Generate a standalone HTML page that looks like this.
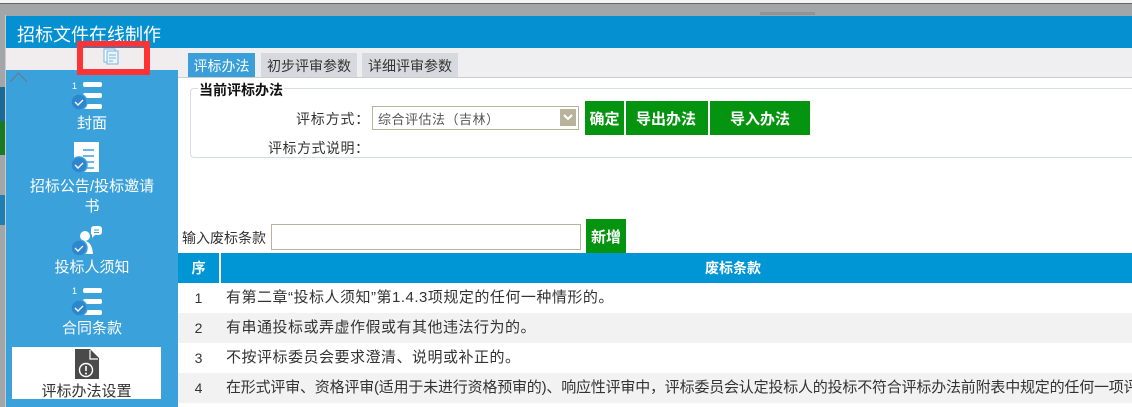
<!DOCTYPE html>
<html><head><meta charset="utf-8"><style>
*{margin:0;padding:0;box-sizing:border-box}
body{width:1132px;height:407px;overflow:hidden;background:#a3a6a9;font-family:"Liberation Sans","Noto Sans CJK SC",sans-serif;position:relative;font-size:13px;color:#333}
.a{position:absolute}
.t{white-space:nowrap}
.btn{position:absolute;background:#05940f;color:#fff;font-weight:bold;font-size:15px;display:flex;align-items:center;justify-content:center}
.row{position:absolute;left:178px;width:954px;height:30px;line-height:30px;font-size:15px;color:#333;overflow:hidden}
.row .n{position:absolute;left:0;width:41px;text-align:center;font-size:14px}
.row .c{position:absolute;left:48px;white-space:nowrap;letter-spacing:0.5px}
.lab{position:absolute;width:172px;text-align:center;color:#fff;font-size:15px;left:6px;white-space:nowrap}
</style></head><body>
<div class="a" style="left:0;top:0;width:1132px;height:4px;background:#f4f4f4;border-bottom:1px solid #666"></div>
<div class="a" style="left:760px;top:12px;width:55px;height:3px;background:#8f9396"></div>
<div class="a" style="left:0;top:87px;width:6px;height:34px;background:#1a6a95"></div>
<div class="a" style="left:0;top:121px;width:6px;height:34px;background:#1a7a22"></div>
<div class="a" style="left:0;top:195px;width:6px;height:30px;background:#1f7fb0"></div>
<div class="a" style="left:5px;top:15px;width:1px;height:392px;background:#c8ccd0"></div>
<div class="a" style="left:6px;top:16px;width:1126px;height:32px;background:#0590d2"></div>
<div class="a t" style="left:17px;top:21px;color:#fff;font-size:18px">招标文件在线制作</div>
<div class="a" style="left:6px;top:48px;width:1126px;height:29px;background:#efeff1"></div>
<div class="a" style="left:6px;top:48px;width:172px;height:22px;background:#f1eced"></div>
<div class="a" style="left:178px;top:77px;width:954px;height:1px;background:#ccc"></div>
<div class="a" style="left:178px;top:78px;width:954px;height:329px;background:#fff"></div>
<div class="a t" style="left:188px;top:53px;width:67px;height:24px;background:#3a9fd8;color:#fff;font-size:14px;line-height:26px;text-align:center">评标办法</div>
<div class="a t" style="left:261px;top:53px;width:96px;height:24px;background:#d7d9de;color:#333;font-size:14px;line-height:26px;text-align:center">初步评审参数</div>
<div class="a t" style="left:362px;top:53px;width:96px;height:24px;background:#d7d9de;color:#333;font-size:14px;line-height:26px;text-align:center">详细评审参数</div>
<div class="a" style="left:6px;top:70px;width:172px;height:337px;background:#3aa1da"></div>
<svg class="a" style="left:9px;top:71px" width="20" height="12"><path d="M1 11 L9.5 2 L18 11" stroke="#6a7a88" fill="none" stroke-width="1"/></svg>
<div class="a" style="left:77px;top:41px;width:73px;height:34px;border:6px solid #f33"></div>
<svg class="a" style="left:103px;top:48px" width="16" height="17"><rect x="1" y="1" width="11" height="13" fill="#fff" stroke="#7ab6de"/><rect x="4" y="3" width="11" height="13" fill="#eaf4fb" stroke="#7ab6de"/><path d="M6 7h7M6 10h7M6 13h4" stroke="#7ab6de"/></svg>
<svg class="a" style="left:70px;top:80px" width="36" height="32"><text x="2" y="9" fill="#fff" font-size="9" font-family="Liberation Sans">1</text><rect x="13" y="2" width="19" height="5" rx="2" fill="#fff"/><rect x="13" y="13" width="19" height="5" rx="2" fill="#fff"/><rect x="13" y="24" width="19" height="5" rx="2" fill="#fff"/><circle cx="9" cy="22" r="8" fill="#2e86cf" stroke="#3aa1da" stroke-width="1.5"/><path d="M5 22l3 3 5-5" stroke="#fff" fill="none" stroke-width="1.4"/></svg>
<div class="lab" style="top:112px">封面</div>
<svg class="a" style="left:70px;top:141px" width="36" height="33"><rect x="4" y="1" width="25" height="30" fill="#fff"/><path d="M13 9h11M13 15h11M13 21h11M13 27h11" stroke="#3aa1da" stroke-width="1.5"/><circle cx="9" cy="24" r="8" fill="#2e86cf" stroke="#3aa1da" stroke-width="1.5"/><path d="M5 24l3 3 5-5" stroke="#fff" fill="none" stroke-width="1.4"/></svg>
<div class="lab" style="top:175px">招标公告/投标邀请</div>
<div class="lab" style="top:195px">书</div>
<svg class="a" style="left:70px;top:224px" width="36" height="33"><path d="M24 2h5a3 3 0 0 1 3 3v3a3 3 0 0 1-3 3h-4l-3 3v-3a3 3 0 0 1-1-3v-3a3 3 0 0 1 3-3z" fill="#fff"/><path d="M24 6h5M24 8.5h5" stroke="#3aa1da"/><circle cx="15" cy="12" r="5" fill="#fff"/><path d="M7 30 Q8 18 15 17 Q22 18 23 30z" fill="#fff"/><circle cx="9" cy="24" r="8" fill="#2e86cf" stroke="#3aa1da" stroke-width="1.5"/><path d="M5 24l3 3 5-5" stroke="#fff" fill="none" stroke-width="1.4"/></svg>
<div class="lab" style="top:256px">投标人须知</div>
<svg class="a" style="left:70px;top:285px" width="36" height="33"><text x="2" y="9" fill="#fff" font-size="9" font-family="Liberation Sans">1</text><rect x="13" y="3" width="19" height="5" rx="2" fill="#fff"/><rect x="13" y="14" width="19" height="5" rx="2" fill="#fff"/><rect x="13" y="25" width="19" height="5" rx="2" fill="#fff"/><circle cx="9" cy="23" r="8" fill="#2e86cf" stroke="#3aa1da" stroke-width="1.5"/><path d="M5 23l3 3 5-5" stroke="#fff" fill="none" stroke-width="1.4"/></svg>
<div class="lab" style="top:317px">合同条款</div>
<div class="a" style="left:12px;top:347px;width:149px;height:52px;background:#fff"></div>
<svg class="a" style="left:75px;top:349px" width="26" height="30"><path d="M0 0h15l9 9v21H0z" fill="#4a4a4a"/><path d="M15 1v9h8" stroke="#fff" fill="none" stroke-width="1.2"/><circle cx="11" cy="21" r="6.5" fill="none" stroke="#fff" stroke-width="1.4"/><path d="M11 17v5" stroke="#fff" stroke-width="1.6"/><circle cx="11" cy="24.5" r="1" fill="#fff"/></svg>
<div class="lab" style="top:380px;color:#333;left:12px;width:149px">评标办法设置</div>
<div class="a" style="left:190px;top:88px;width:950px;height:70px;border:1px solid #d5dde5;border-radius:4px"></div>
<div class="a t" style="left:198px;top:80px;background:#fff;padding:0 1px;font-weight:bold;font-size:14px;color:#111">当前评标办法</div>
<div class="a t" style="left:296px;top:109px;font-size:14px;color:#333;letter-spacing:0.8px">评标方式：</div>
<div class="a" style="left:372px;top:106px;width:207px;height:24px;border:1px solid #b8b39a;background:#fff"></div>
<div class="a t" style="left:378px;top:109px;font-size:13px;color:#555;letter-spacing:0.5px">综合评估法（吉林）</div>
<div class="a" style="left:560px;top:109px;width:16px;height:17px;background:#b8b39a"></div>
<svg class="a" style="left:563px;top:113px" width="10" height="8"><path d="M1 2l4 4 4-4" stroke="#fff" stroke-width="2" fill="none"/></svg>
<div class="a t" style="left:268px;top:138px;font-size:14px;color:#333;letter-spacing:0.5px">评标方式说明：</div>
<div class="btn" style="left:585px;top:101px;width:39px;height:34px">确定</div>
<div class="btn" style="left:626px;top:101px;width:82px;height:34px;justify-content:flex-start;padding-left:10px">导出办法</div>
<div class="btn" style="left:710px;top:101px;width:100px;height:34px">导入办法</div>
<div class="a t" style="left:182px;top:228px;font-size:14px;color:#333">输入废标条款</div>
<div class="a" style="left:271px;top:224px;width:310px;height:26px;border:1px solid #b8b39a"></div>
<div class="btn" style="left:586px;top:219px;width:40px;height:34px">新增</div>
<div class="a" style="left:178px;top:253px;width:954px;height:30px;background:#0095d5"></div>
<div class="a" style="left:219px;top:253px;width:2px;height:30px;background:#fff"></div>
<div class="a t" style="left:178px;top:253px;width:41px;line-height:30px;text-align:center;color:#fff;font-weight:bold;font-size:14px">序</div>
<div class="a t" style="left:705px;top:253px;line-height:30px;color:#fff;font-weight:bold;font-size:14px">废标条款</div>
<div class="row" style="top:283px;background:#fff"><span class="n">1</span><span class="c">有第二章“投标人须知”第1.4.3项规定的任何一种情形的。</span></div>
<div class="row" style="top:313px;background:#f2f2f2"><span class="n">2</span><span class="c">有串通投标或弄虚作假或有其他违法行为的。</span></div>
<div class="row" style="top:343px;background:#fff"><span class="n">3</span><span class="c">不按评标委员会要求澄清、说明或补正的。</span></div>
<div class="row" style="top:373px;background:#f2f2f2"><span class="n">4</span><span class="c" style="letter-spacing:-0.2px">在形式评审、资格评审(适用于未进行资格预审的)、响应性评审中，评标委员会认定投标人的投标不符合评标办法前附表中规定的任何一项评审标准的。</span></div>
</body></html>
